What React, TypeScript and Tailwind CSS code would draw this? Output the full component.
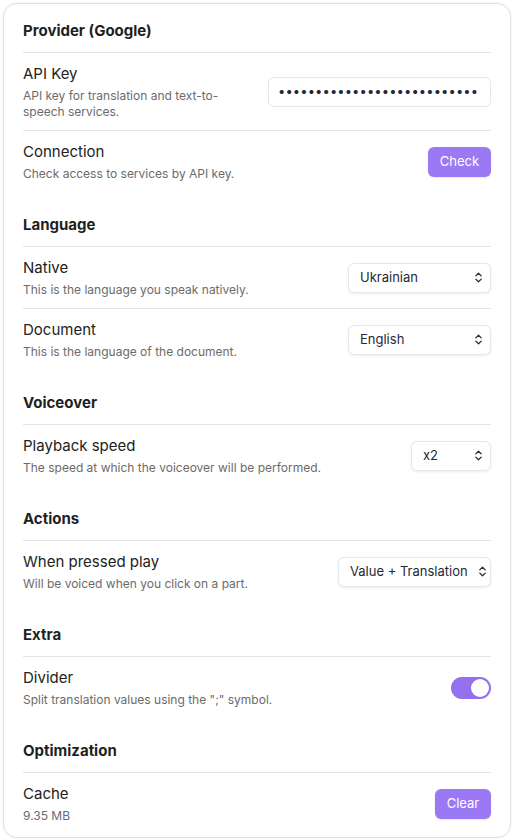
import React from "react";

const Chevrons = () => (
  <svg className="shrink-0" width="13" height="13" viewBox="0 0 24 24" fill="none" stroke="#2d2d2d" strokeWidth="2.4" strokeLinecap="round" strokeLinejoin="round">
    <path d="m7 15 5 5 5-5" />
    <path d="m7 9 5-5 5 5" />
  </svg>
);

function Select({ value, w }: { value: string; w: string }) {
  return (
    <div className={`flex h-[30px] items-center justify-between gap-2 rounded-md border border-[#e5e7eb] bg-white pl-[11px] pr-[5px] text-[13px] text-[#1f2937] shadow-[0_1px_3px_rgba(0,0,0,0.08)] ${w}`}>
      <span className="whitespace-nowrap">{value}</span>
      <Chevrons />
    </div>
  );
}

function Row({ label, desc, right, last }: { label: string; desc: React.ReactNode; right: React.ReactNode; last?: boolean }) {
  return (
    <div className={`flex items-center justify-between gap-4 py-2.5 ${last ? "" : "border-b border-[#e5e5e5]"}`}>
      <div className="flex-1 min-w-0">
        <div className="text-[15px] leading-[22px] text-[#222]">{label}</div>
        <div className="mt-[3px] text-[12px] leading-[16px] text-[#6b6b6b]">{desc}</div>
      </div>
      <div className="shrink-0">{right}</div>
    </div>
  );
}

function Section({ title, children, first }: { title: string; children: React.ReactNode; first?: boolean }) {
  return (
    <div className={first ? "" : "mt-[23px]"}>
      <div className="border-b border-[#e5e5e5] pb-[11px] text-[15px] font-bold leading-[20px] text-[#1f1f1f]">{title}</div>
      {children}
    </div>
  );
}

const Btn = ({ children, w }: { children: React.ReactNode; w: string }) => (
  <div className={`flex h-[30px] items-center justify-center rounded-md bg-[#9b79f4] text-[13px] text-white shadow-[0_1px_2px_rgba(0,0,0,0.1)] ${w}`}>
    {children}
  </div>
);

export default function App() {
  return (
    <div className="min-h-[840px] bg-white p-[3px]" style={{ fontFamily: "Inter, 'Noto Sans', sans-serif" }}>
      <div className="rounded-[14px] border border-[#e2e2e2] bg-white px-[19px] pb-[3px] pt-[17px] shadow-[0_0_3px_rgba(0,0,0,0.06)]">
        <Section title="Provider (Google)" first>
          <Row
            label="API Key"
            desc="API key for translation and text-to-speech services."
            right={
              <div className="flex h-[30px] w-[223px] items-center overflow-hidden rounded-md border border-[#e5e7eb] bg-white px-[9px]">
                <span className="whitespace-nowrap text-[13px] tracking-[0.1px] text-[#1f2937]">{"•".repeat(27)}</span>
              </div>
            }
          />
          <Row label="Connection" desc="Check access to services by API key." right={<Btn w="w-[63px]">Check</Btn>} last />
        </Section>
        <Section title="Language">
          <Row label="Native" desc="This is the language you speak natively." right={<Select value="Ukrainian" w="w-[143px]" />} />
          <Row label="Document" desc="This is the language of the document." right={<Select value="English" w="w-[143px]" />} last />
        </Section>
        <Section title="Voiceover">
          <Row label="Playback speed" desc="The speed at which the voiceover will be performed." right={<Select value="x2" w="w-[80px]" />} last />
        </Section>
        <Section title="Actions">
          <Row label="When pressed play" desc="Will be voiced when you click on a part." right={<Select value="Value + Translation" w="w-[153px]" />} last />
        </Section>
        <Section title="Extra">
          <Row
            label="Divider"
            desc={'Split translation values using the ";" symbol.'}
            right={
              <div className="flex h-[22px] w-[40px] items-center justify-end rounded-full bg-[#9270ee] p-[2px]">
                <div className="h-[18px] w-[18px] rounded-full bg-white" />
              </div>
            }
            last
          />
        </Section>
        <Section title="Optimization">
          <Row label="Cache" desc="9.35 MB" right={<Btn w="w-[56px]">Clear</Btn>} last />
        </Section>
      </div>
    </div>
  );
}
